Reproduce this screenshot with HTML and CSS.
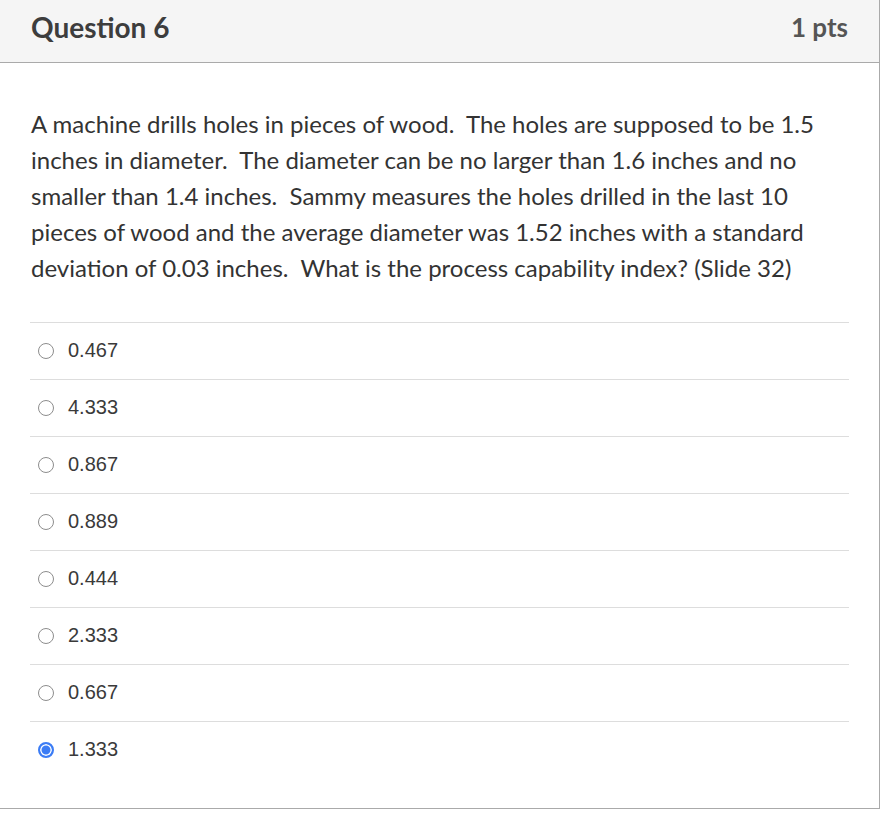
FILE: index.html
```html
<!DOCTYPE html>
<html>
<head>
<meta charset="utf-8">
<link rel="stylesheet" href="styles.css">
</head>
<body>
<div class="card">
  <div class="header">
    <h2 class="title">Question 6</h2>
    <span class="pts">1 pts</span>
  </div>
  <div class="body">
    <p class="text">A machine drills holes in pieces of wood.&nbsp; The holes are supposed to be 1.5 inches in diameter.&nbsp; The diameter can be no larger than 1.6 inches and no smaller than 1.4 inches.&nbsp; Sammy measures the holes drilled in the last 10 pieces of wood and the average diameter was 1.52 inches with a standard deviation of 0.03 inches.&nbsp; What is the process capability index? (Slide 32)</p>
    <div class="answers">
      <label class="answer"><span class="radio"></span><span class="label">0.467</span></label>
      <label class="answer"><span class="radio"></span><span class="label">4.333</span></label>
      <label class="answer"><span class="radio"></span><span class="label">0.867</span></label>
      <label class="answer"><span class="radio"></span><span class="label">0.889</span></label>
      <label class="answer"><span class="radio"></span><span class="label">0.444</span></label>
      <label class="answer"><span class="radio"></span><span class="label">2.333</span></label>
      <label class="answer"><span class="radio"></span><span class="label">0.667</span></label>
      <label class="answer"><span class="radio checked"></span><span class="label">1.333</span></label>
    </div>
  </div>
</div>
</body>
</html>
```

FILE: styles.css
```css
html, body {
  margin: 0;
  padding: 0;
  background: #ffffff;
}
.card {
  width: 880px;
  height: 809px;
  box-sizing: border-box;
  border-right: 1px solid #aaaaaa;
  border-bottom: 1px solid #aaaaaa;
  background: #ffffff;
  font-family: Lato, "Liberation Sans", sans-serif;
  color: #333333;
}
.header {
  height: 54px;
  box-sizing: content-box;
  background: #f5f5f5;
  border-bottom: 1px solid #aaaaaa;
  display: flex;
  align-items: center;
  justify-content: space-between;
  padding: 0 31px 8px 31px;
}
.title {
  margin: 0;
  font-size: 28px;
  font-weight: 700;
  color: #3d3d3d;
}
.pts {
  font-size: 26px;
  font-weight: 700;
  color: #555555;
}
.body {
  padding: 43px 30px 0 30px;
}
.text {
  margin: 0 0 36px 1px;
  font-size: 24px;
  line-height: 36px;
  color: #333333;
}
.answers {
  display: flex;
  flex-direction: column;
}
.answer {
  display: flex;
  align-items: center;
  height: 55px;
  padding-bottom: 1px;
  border-top: 1px solid #dddddd;
  padding-left: 8px;
  gap: 14px;
  font-family: "Liberation Sans", Arial, sans-serif;
  font-size: 20px;
  color: #3a3a3a;
}
.radio {
  width: 14px;
  height: 14px;
  border: 1px solid #8d8d8d;
  border-radius: 50%;
  box-sizing: content-box;
  flex: none;
}
.radio.checked {
  width: 12px;
  height: 12px;
  border: 2px solid #3b7cf5;
  background: #3b7cf5;
  box-shadow: inset 0 0 0 1.5px #ffffff;
}
```
